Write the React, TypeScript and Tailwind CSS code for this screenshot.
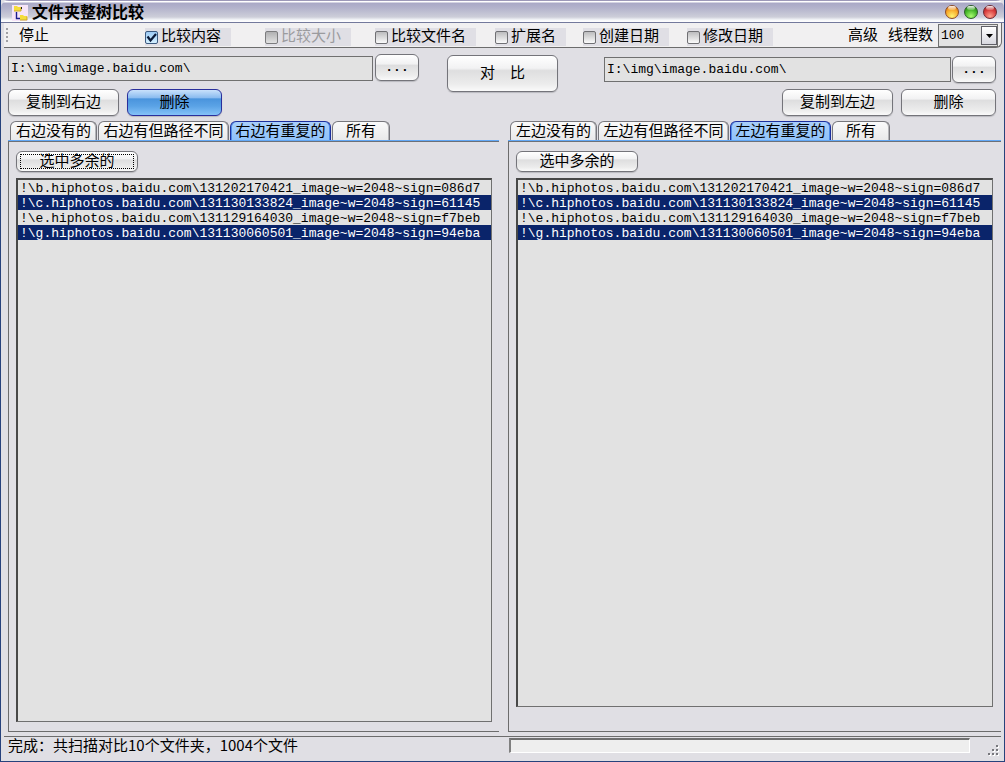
import React, { useState } from "react";

const files = [
  "!\\b.hiphotos.baidu.com\\131202170421_image~w=2048~sign=086d7",
  "!\\c.hiphotos.baidu.com\\131130133824_image~w=2048~sign=61145",
  "!\\e.hiphotos.baidu.com\\131129164030_image~w=2048~sign=f7beb",
  "!\\g.hiphotos.baidu.com\\131130060501_image~w=2048~sign=94eba",
];

function PushButton({
  children,
  className = "",
  primary = false,
  label,
}: {
  children: React.ReactNode;
  className?: string;
  primary?: boolean;
  label?: string;
}) {
  const tone = primary
    ? "border-[#2a2f9c] bg-[linear-gradient(to_bottom,#c9e1fb_0%,#8dbdf0_30%,#4a94dd_36%,#5ba3e6_65%,#84c2f8_100%)]"
    : "border-[#74747a] bg-[linear-gradient(to_bottom,#ffffff_0%,#f2f2f3_35%,#dededf_42%,#ececec_80%,#fafafa_100%)]";
  return (
    <button
      type="button"
      aria-label={label}
      className={`flex shrink-0 items-center justify-center whitespace-pre rounded-md border leading-4 shadow-[0_1px_1px_#b9b9be] ${tone} ${className}`}
    >
      {children}
    </button>
  );
}

function Option({
  text,
  className = "",
  checked = false,
  disabled = false,
}: {
  text: string;
  className?: string;
  checked?: boolean;
  disabled?: boolean;
}) {
  const [on, setOn] = useState(checked);
  return (
    <label
      className={`flex h-[18px] shrink-0 items-start bg-[#e0dfe5] pr-[10px] leading-[14px] ${
        disabled ? "text-[#9b9b9e]" : "text-black"
      } ${className}`}
    >
      <span className="relative mt-[3px] mr-[3px] block h-[13px] w-[13px]">
        <input
          type="checkbox"
          checked={on}
          disabled={disabled}
          onChange={(e) => setOn(e.target.checked)}
          className={`block h-[13px] w-[13px] appearance-none rounded-[2px] border ${
            on
              ? "border-[#3c5a80] bg-linear-to-b from-[#9ecbf5] to-[#d4f0ff]"
              : disabled
                ? "border-[#7c7c7e] bg-linear-to-b from-[#b0b0b2] to-[#e2e2e2]"
                : "border-[#707074] bg-linear-to-b from-[#bcbcbe] to-[#fbfbfb]"
          }`}
        />
        {on && (
          <svg viewBox="0 0 13 13" className="pointer-events-none absolute inset-0 h-[13px] w-[13px]">
            <path d="M2.500 5.500 L5.500 9.500 L11 3" fill="none" stroke="#0b1a38" strokeWidth="2.2" />
          </svg>
        )}
      </span>
      {text}
    </label>
  );
}

function PathField({ label, className = "" }: { label: string; className?: string }) {
  return (
    <input
      aria-label={label}
      defaultValue={"I:\\img\\image.baidu.com\\"}
      className={`h-[25px] min-w-0 flex-1 border border-[#707070] bg-[#e2e2e2] px-[2px] font-['Liberation_Mono','Noto_Sans_CJK_SC',monospace] text-[13px] leading-4 outline-none ${className}`}
    />
  );
}

function Panel({
  side,
  focused = false,
  className,
  listEnd,
}: {
  side: string;
  focused?: boolean;
  className: string;
  listEnd: string;
}) {
  const tabs = [
    { text: `${side}边没有的`, width: "w-[87px]" },
    { text: `${side}边有但路径不同`, width: "w-[131px]" },
    { text: `${side}边有重复的`, width: "w-[101px]" },
    { text: "所有", width: "w-[58px]" },
  ];
  return (
    <section className={`flex min-w-0 flex-col ${className}`}>
      <div role="tablist" className="flex gap-px pl-[2px]">
        {tabs.map((t, i) => (
          <button
            key={t.text}
            type="button"
            role="tab"
            aria-selected={i === 2}
            className={`h-[19px] shrink-0 whitespace-nowrap rounded-t-md border border-b-0 pb-[2px] leading-4 ${t.width} ${
              i === 2
                ? "border-[#1c2f9c] bg-linear-to-b from-[#a9cffa] to-[#8fc2fb] shadow-[inset_1px_0_0_#4f8be8,inset_-1px_0_0_#4f8be8]"
                : "border-[#77777c] bg-linear-to-b from-[#fafafa] to-[#e9e9ea] shadow-[inset_-1px_0_0_#b4b4b8]"
            }`}
          >
            {t.text}
          </button>
        ))}
      </div>
      <div className="h-[2px] border-b border-[#6c7078] bg-[#62a8f6]" />
      <div className={`flex min-h-0 flex-1 flex-col border-b border-l border-[#6c6c6c] pl-[7px] pt-[9px] ${listEnd}`}>
        <PushButton className="relative h-[21px] w-[122px] pb-1">
          {"选中多余的"}
          {focused && (
            <span className="pointer-events-none absolute inset-x-[3px] inset-y-[2px] border border-dotted border-black" />
          )}
        </PushButton>
        <ul
          role="listbox"
          aria-multiselectable="true"
          aria-label={`${side}边文件列表`}
          className="mt-[6px] min-h-0 flex-1 overflow-hidden border border-t-2 border-l-2 border-[#707070] border-t-[#484848] border-l-[#484848] bg-[#e2e2e2] font-['Liberation_Mono','Noto_Sans_CJK_SC',monospace] text-[13px] leading-[17px]"
        >
          {files.map((f, i) => (
            <li
              key={f}
              role="option"
              aria-selected={i % 2 === 1}
              className={`h-[15px] overflow-hidden whitespace-pre pl-[2px] ${
                i % 2 === 1 ? "bg-[#0a246a] text-white" : "text-black"
              }`}
            >
              {f}
            </li>
          ))}
        </ul>
      </div>
    </section>
  );
}

function Orb({ label, color }: { label: string; color: string }) {
  return (
    <button
      type="button"
      aria-label={label}
      className={`relative h-[14px] w-[14px] rounded-full border ${color}`}
    >
      <span className="absolute inset-x-[2px] top-0 h-1 rounded-full bg-linear-to-b from-white/90 to-white/20" />
    </button>
  );
}

export default function App() {
  return (
    <div className="flex h-screen min-h-96 flex-col overflow-hidden border-b border-l border-r border-[#27427c] bg-[#e0dfe4] font-['Noto_Sans_CJK_SC',sans-serif] text-[15px] leading-4 text-black">
      <header className="flex h-[23px] shrink-0 items-center rounded-t-lg border-b border-[#73799c] bg-[linear-gradient(to_bottom,#9c98b8_0px,#9c98b8_1px,#ffffff_1px,#ffffff_2px,#a9a8c6_3px,#b3b3cc_8px,#cdced9_17px,#f6f8fb_20px,#ffffff_22px)] pl-[11px] pr-[7px]">
        <svg viewBox="0 0 16 16" className="mt-[3px] h-4 w-4 shrink-0">
          <rect width="16" height="16" fill="#f6e4f8" />
          <path d="M2 1h3l1 1h3v4H2z" fill="#f4dc3c" />
          <path d="M2 6h7V2.500" fill="none" stroke="#c9a92c" />
          <path d="M9 2h1v2H9z" fill="#222" />
          <path d="M4.500 7v6.500H8" fill="none" stroke="#1c1c8c" strokeWidth="1.4" />
          <path d="M8 10h3l1 1h3v4H8z" fill="#f4dc3c" />
          <path d="M8 15h7V11.500" fill="none" stroke="#c9a92c" />
        </svg>
        <h1 className="ml-1 flex-1 text-base leading-4 font-bold">文件夹整树比较</h1>
        <div className="mt-[2px] flex gap-[5px]">
          <Orb label="最小化" color="border-[#8c4a24] bg-[radial-gradient(circle_at_50%_85%,#fff470,#f8a828_55%,#c85c10)]" />
          <Orb label="最大化" color="border-[#2c5c28] bg-[radial-gradient(circle_at_50%_85%,#a8fc70,#44b428_55%,#187010)]" />
          <Orb label="关闭" color="border-[#6c2830] bg-[radial-gradient(circle_at_50%_85%,#ffa08c,#d83c3c_55%,#981820)]" />
        </div>
      </header>

      <div className="mr-[2px] ml-[3px] flex h-[25px] shrink-0 items-start rounded-br-md border-r border-b border-[#6c6c6c] bg-[#f1f0f1] pr-[3px] pt-px">
        <span className="mt-1 ml-[2px] h-[14px] border-l-2 border-dotted border-[#a0a0a4]" />
        <button type="button" className="mt-[2px] ml-[11px] leading-4">停止</button>
        <Option text="比较内容" checked className="mt-1 ml-24" />
        <Option text="比较大小" disabled className="mt-1 ml-[34px]" />
        <Option text="比较文件名" className="mt-1 ml-6" />
        <Option text="扩展名" className="mt-1 ml-[19px]" />
        <Option text="创建日期" className="mt-1 ml-[17px]" />
        <Option text="修改日期" className="mt-1 ml-[18px]" />
        <button type="button" className="mt-[2px] ml-auto leading-4">高级</button>
        <label htmlFor="threads" className="mt-[2px] ml-[10px] leading-4">线程数</label>
        <div className="relative ml-[5px] h-[23px] w-[60px]">
          <select
            id="threads"
            defaultValue="100"
            className="h-full w-full appearance-none border border-[#707070] bg-[#e2e2e2] pl-[2px] font-['Liberation_Mono',monospace] text-[13px] leading-4"
          >
            <option>100</option>
          </select>
          <span className="pointer-events-none absolute top-[2px] right-px flex h-[19px] w-4 items-center justify-center border border-[#606068] bg-linear-to-b from-white to-[#d8d8e0]">
            <svg viewBox="0 0 7 4" className="h-1 w-[7px]">
              <path d="M0 0h7L3.500 4z" />
            </svg>
          </span>
        </div>
      </div>

      <div className="flex shrink-0 items-start pr-2 pl-[7px] pt-[6px]">
        <div className="flex-[411_1_0%]">
          <div className="flex items-start gap-[2px]">
            <PathField label="左边路径" className="mt-[2px]" />
            <PushButton label="浏览左边" className="h-[27px] w-11 font-['Liberation_Mono',monospace] text-[13px] font-bold">...</PushButton>
          </div>
          <div className="mt-2 flex gap-2">
            <PushButton className="h-[27px] w-[111px] pb-1">复制到右边</PushButton>
            <PushButton primary className="h-[27px] w-[95px] pb-1">删除</PushButton>
          </div>
        </div>
        <PushButton className="mt-px mr-[46px] ml-7 h-[37px] w-[111px] pb-1">{"对　比"}</PushButton>
        <div className="flex-[392_1_0%] pt-[2px]">
          <div className="flex items-start gap-px">
            <PathField label="右边路径" className="mt-px" />
            <PushButton label="浏览右边" className="h-[27px] w-11 font-['Liberation_Mono',monospace] text-[13px] font-bold">...</PushButton>
          </div>
          <div className="mt-[6px] flex justify-end gap-2">
            <PushButton className="h-[27px] w-[111px] pb-1">复制到左边</PushButton>
            <PushButton className="h-[27px] w-[95px] pb-1">删除</PushButton>
          </div>
        </div>
      </div>

      <main className="mt-[5px] flex min-h-0 flex-1 gap-[9px] pr-[3px] pl-[7px]">
        <Panel side="右" focused className="flex-[491_1_0%]" listEnd="pr-[7px] pb-[9px]" />
        <Panel side="左" className="flex-[493_1_0%]" listEnd="pr-2 pb-6" />
      </main>

      <footer className="mt-1 mr-[3px] ml-[3px] flex h-[25px] shrink-0 items-start border-t border-[#6c6c6c]">
        <p className="flex-1 pl-1">完成：共扫描对比10个文件夹，1004个文件</p>
        <div
          role="progressbar"
          aria-label="进度"
          aria-valuenow={0}
          className="mt-px h-[15px] w-[461px] border border-t-2 border-l-2 border-white border-t-[#707070] border-l-[#808080] bg-[#eeeeee]"
        />
        <svg viewBox="0 0 12 12" className="mt-2 mr-px ml-[18px] h-3 w-3 shrink-0">
          <path
            d="M9 1h2v2H9zM5 5h2v2H5zM9 5h2v2H9zM1 9h2v2H1zM5 9h2v2H5zM9 9h2v2H9z"
            fill="#fff"
          />
          <path
            d="M8 0h2v2H8zM4 4h2v2H4zM8 4h2v2H8zM0 8h2v2H0zM4 8h2v2H4zM8 8h2v2H8z"
            fill="#77777c"
          />
        </svg>
      </footer>
    </div>
  );
}
